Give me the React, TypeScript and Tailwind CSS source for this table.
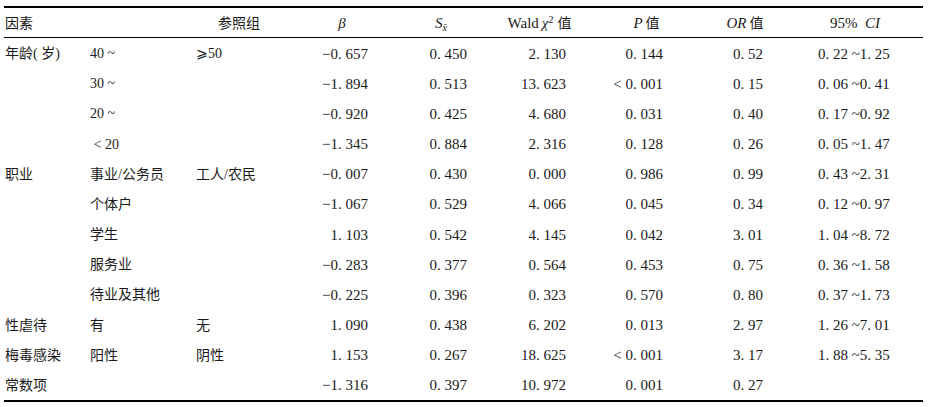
import React from "react";

type Row = {
  f?: string;
  lv?: string;
  ref?: string;
  b: string;
  s: string;
  w: string;
  p: string;
  or: string;
  ci?: string;
};

const rows: Row[] = [
  { f: "年龄( 岁)", lv: "40 ~", ref: "⩾50", b: "−0. 657", s: "0. 450", w: "2. 130", p: "0. 144", or: "0. 52", ci: "0. 22 ~1. 25" },
  { lv: "30 ~", b: "−1. 894", s: "0. 513", w: "13. 623", p: "< 0. 001", or: "0. 15", ci: "0. 06 ~0. 41" },
  { lv: "20 ~", b: "−0. 920", s: "0. 425", w: "4. 680", p: "0. 031", or: "0. 40", ci: "0. 17 ~0. 92" },
  { lv: " < 20", b: "−1. 345", s: "0. 884", w: "2. 316", p: "0. 128", or: "0. 26", ci: "0. 05 ~1. 47" },
  { f: "职业", lv: "事业/公务员", ref: "工人/农民", b: "−0. 007", s: "0. 430", w: "0. 000", p: "0. 986", or: "0. 99", ci: "0. 43 ~2. 31" },
  { lv: "个体户", b: "−1. 067", s: "0. 529", w: "4. 066", p: "0. 045", or: "0. 34", ci: "0. 12 ~0. 97" },
  { lv: "学生", b: "1. 103", s: "0. 542", w: "4. 145", p: "0. 042", or: "3. 01", ci: "1. 04 ~8. 72" },
  { lv: "服务业", b: "−0. 283", s: "0. 377", w: "0. 564", p: "0. 453", or: "0. 75", ci: "0. 36 ~1. 58" },
  { lv: "待业及其他", b: "−0. 225", s: "0. 396", w: "0. 323", p: "0. 570", or: "0. 80", ci: "0. 37 ~1. 73" },
  { f: "性虐待", lv: "有", ref: "无", b: "1. 090", s: "0. 438", w: "6. 202", p: "0. 013", or: "2. 97", ci: "1. 26 ~7. 01" },
  { f: "梅毒感染", lv: "阳性", ref: "阴性", b: "1. 153", s: "0. 267", w: "18. 625", p: "< 0. 001", or: "3. 17", ci: "1. 88 ~5. 35" },
  { f: "常数项", b: "−1. 316", s: "0. 397", w: "10. 972", p: "0. 001", or: "0. 27" },
];

const cols = "grid grid-cols-[86px_106px_104px_90px_100px_100px_100px_100px_133px] items-center";

export default function App() {
  return (
    <div
      className="w-[931px] h-[407px] bg-white text-[#1a1a1a] pt-[6px] pl-[4px]"
      style={{ fontFamily: '"Liberation Serif", "Noto Sans CJK SC", serif' }}
    >
      <div className="w-[919px] border-t-2 border-b-2 border-black text-[15px] leading-none">
        <div className={`${cols} h-[30px] border-b border-black pt-[2px]`}>
          <div className="pl-[1px] text-[14px]">因素</div>
          <div />
          <div className="pl-[22px] text-[14px]">参照组</div>
          <div className="text-center pr-[6px] italic">β</div>
          <div className="text-center pl-[2px] italic">
            S<span className="relative top-[3px] text-[10px]">x̄</span>
          </div>
          <div className="text-center pr-[1px] whitespace-nowrap">
            Wald<span className="italic ml-[3px]">χ</span>
            <span className="relative -top-[5px] text-[10px]">2</span>
            <span className="text-[14px] ml-[4px]">值</span>
          </div>
          <div className="text-center pl-[13px] whitespace-nowrap">
            <span className="italic">P</span>
            <span className="text-[14px] ml-[3px]">值</span>
          </div>
          <div className="text-center pl-[10px] whitespace-nowrap">
            <span className="italic">OR</span>
            <span className="text-[14px] ml-[3px]">值</span>
          </div>
          <div className="text-center pr-[3px] whitespace-pre">
            95%  <span className="italic">CI</span>
          </div>
        </div>
        <div className="grid grid-rows-[repeat(12,1fr)] h-[362px]">
          {rows.map((r, i) => (
            <div key={i} className={`${cols} pt-[2px]`}>
              <div className="pl-[1px] text-[14px] whitespace-nowrap">{r.f ?? ""}</div>
              <div className="text-[14px] whitespace-pre">{r.lv ?? ""}</div>
              <div className="text-[14px] whitespace-nowrap">{r.ref ?? ""}</div>
              <div className="text-right pr-[22px] whitespace-pre">{r.b}</div>
              <div className="text-right pr-[23px] whitespace-pre">{r.s}</div>
              <div className="text-right pr-[24px] whitespace-pre">{r.w}</div>
              <div className="text-right pr-[27px] whitespace-pre">{r.p}</div>
              <div className="text-right pr-[27px] whitespace-pre">{r.or}</div>
              <div className="pl-[28px] whitespace-pre">{r.ci ?? ""}</div>
            </div>
          ))}
        </div>
      </div>
    </div>
  );
}
